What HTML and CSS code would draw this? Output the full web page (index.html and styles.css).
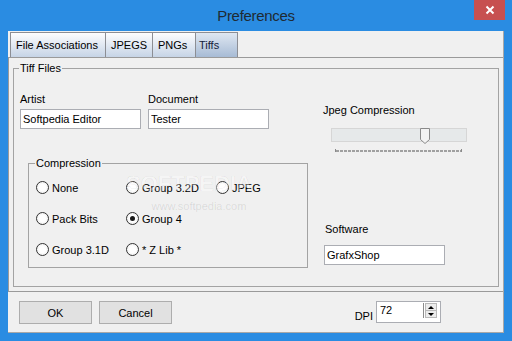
FILE: index.html
```html
<!DOCTYPE html>
<html>
<head>
	<title>Preferences</title>
	<meta charset="utf-8" />
	<link rel="stylesheet" href="styles.css">
</head>
<body>
	<div class="window">
		<div class="titlebar">
			<span></span>
			<h1>Preferences</h1>
			<button class="close" aria-label="close">
				<svg width="10" height="10" viewBox="0 0 10 10"><path d="M1.5 1.5L8.5 8.5M8.5 1.5L1.5 8.5" stroke="#fff" stroke-width="2"/></svg>
			</button>
		</div>
		<div class="client">
			<div class="tabs">
				<div class="tab tab-assoc">File Associations</div>
				<div class="tab tab-jpegs">JPEGS</div>
				<div class="tab tab-pngs">PNGs</div>
				<div class="tab tab-tiffs active">Tiffs</div>
			</div>
			<div class="panel">
				<fieldset class="group tiff-files">
					<legend>Tiff Files</legend>
					<div class="tiff-body">
						<div class="col-left">
							<div class="fields">
								<div class="field">
									<label for="inpArtist">Artist</label>
									<input type="text" id="inpArtist" value="Softpedia Editor">
								</div>
								<div class="field">
									<label for="inpDocument">Document</label>
									<input type="text" id="inpDocument" value="Tester">
								</div>
							</div>
							<fieldset class="group compression">
								<legend>Compression</legend>
								<div class="radios">
									<label><input type="radio" name="comp"> None</label>
									<label><input type="radio" name="comp"> Group 3.2D</label>
									<label><input type="radio" name="comp"> JPEG</label>
									<label><input type="radio" name="comp"> Pack Bits</label>
									<label><input type="radio" name="comp" checked> Group 4</label>
									<span></span>
									<label><input type="radio" name="comp"> Group 3.1D</label>
									<label><input type="radio" name="comp"> * Z Lib *</label>
								</div>
							</fieldset>
						</div>
						<div class="col-right">
							<p class="label jpeg-label">Jpeg Compression</p>
							<div class="slider">
								<svg class="thumb" width="10" height="16" viewBox="0 0 10 16"><path d="M0.5 0.5H9.5V11.5L5 15.5L0.5 11.5Z" fill="#f3f3f3" stroke="#8a8a8a"/></svg>
							</div>
							<div class="ticks"></div>
							<label class="label software-label" for="inpSoftware">Software</label>
							<input type="text" id="inpSoftware" class="software" value="GrafxShop">
						</div>
					</div>
				</fieldset>
			</div>
			<div class="bottombar">
				<button class="btn">OK</button>
				<button class="btn">Cancel</button>
				<div class="dpi">
					<span class="dpi-label">DPI</span>
					<div class="spin">
						<span class="spin-value">72</span>
						<div class="spin-btns">
							<span class="up"></span>
							<span class="down"></span>
						</div>
					</div>
				</div>
			</div>
		</div>
		<div class="watermark">
			<span class="wm-big">SOFTPEDIA</span>
			<span class="wm-small">www.softpedia.com</span>
		</div>
	</div>
</body>
</html>
```
FILE: styles.css
```css
/* general styles */
* { box-sizing: border-box; }
body { margin: 0; font-family: "Liberation Sans", Arial, sans-serif; font-size: 11px; color: #000; background: #2a8ce2; }
.window { position: relative; width: 512px; height: 341px; padding: 0 8px; background: #2a8ce2; }

/* title bar */
.titlebar { display: grid; grid-template-columns: 1fr auto 1fr; height: 31px; }
.titlebar h1 { margin: 0; padding-top: 7px; font-size: 15px; line-height: 17px; font-weight: normal; color: #1f2a33; letter-spacing: -0.3px; }
.close { justify-self: end; display: flex; align-items: center; justify-content: center; width: 31px; height: 20px; margin-right: -1px; padding: 0; border: none; background: #c75050; }

/* client area */
.client { height: 302px; background: #f0f0f0; border-right: 1px solid #a8a8a8; border-bottom: 1px solid #a8a8a8; }
.tabs { display: flex; height: 26px; padding: 1px 0 0 2px; }
.tab { height: 25px; padding: 0 5px; line-height: 24px; border: 1px solid #8c8e94; border-bottom: none; background: linear-gradient(#fdfdfe, #c6d4e6); white-space: nowrap; }
.tab + .tab { margin-left: -1px; }
.tab-assoc { width: 96px; }
.tab-jpegs { width: 48px; }
.tab-pngs { width: 44px; }
.tab-tiffs { width: 43px; padding-left: 3px; }
.tab.active { background: linear-gradient(#dfe7f1, #a7bbd5); color: #14213a; }
.panel { height: 235px; padding: 4px; border: 1px solid #9a9a9a; border-right: none; }

/* group boxes */
.group { margin: 0; padding: 0; border: 1px solid #a3a3a3; }
.group legend { padding: 0 1px; line-height: 13px; }
.tiff-files { height: 225px; }
.tiff-files legend { margin-left: 5px; }
.tiff-body { display: grid; grid-template-columns: 303px 1fr; padding: 18px 0 0 6px; }
.label { display: block; margin: 0; line-height: 13px; }
input[type=text] { display: block; width: 121px; height: 20px; padding: 0 2px; border: 1px solid #abadb3; font-family: inherit; font-size: 11px; color: #000; background: #fff; }

/* left column */
.fields { display: flex; gap: 7px; }
.field label { display: block; line-height: 13px; margin-bottom: 3px; }
.compression { width: 280px; margin: 28px 0 0 8px; }
.compression legend { margin-left: 6px; }
.radios { display: grid; grid-template-columns: 90px 90px auto; grid-auto-rows: 31px; padding: 2px 0 2px 7px; }
.radios label { display: flex; align-items: center; gap: 3px; }
input[type=radio] { appearance: none; width: 13px; height: 13px; margin: 0; border: 1px solid #333; border-radius: 50%; background: radial-gradient(#fff 40%, #e6e6e6); display: grid; place-items: center; }
input[type=radio]:checked::after { content: ""; width: 5px; height: 5px; border-radius: 50%; background: #1a1a1a; }

/* right column */
.jpeg-label { margin-top: 11px; }
.slider { width: 136px; height: 14px; margin: 11px 0 0 8px; padding-left: 88px; border: 1px solid #d6d6d6; background: #e6e9ea; }
.thumb { display: block; margin-top: -1px; }
.ticks { width: 127px; height: 3px; margin: 7px 0 0 12px; border-left: 1px solid #8a8a8a; border-right: 1px solid #8a8a8a; background: repeating-linear-gradient(90deg, #a0a0a0 0 3px, transparent 3px 4px); background-size: 100% 2px; background-repeat: no-repeat; background-position: 0 1px; }
.software-label { margin: 71px 0 0 2px; }
.software { margin: 9px 0 0 1px; }

/* bottom bar */
.bottombar { display: flex; align-items: flex-start; gap: 7px; padding: 9px 62px 0 11px; }
.btn { width: 73px; height: 23px; padding: 0; border: 1px solid #adadad; background: #e1e1e1; font-family: inherit; font-size: 11px; color: #000; }
.dpi { display: flex; align-items: flex-start; gap: 3px; margin-left: auto; }
.dpi-label { margin-top: 9px; line-height: 13px; }
.spin { display: flex; width: 65px; height: 22px; border: 1px solid #abadb3; background: #fff; }
.spin-value { flex: 1; padding: 2px 0 0 3px; line-height: 13px; }
.spin-btns { display: flex; flex-direction: column; width: 14px; height: 15px; margin: 1px 3px 0 0; border-left: 1px solid #8c8c8c; padding-left: 1px; }
.spin-btns span { flex: 1; display: flex; align-items: center; justify-content: center; border: 1px solid #b9b9b9; background: #ececec; }
.spin-btns span + span { margin-top: -1px; }
.up::after { content: ""; border: 3px solid transparent; border-bottom: 3px solid #000; border-top: none; }
.down::after { content: ""; border: 3px solid transparent; border-top: 3px solid #000; border-bottom: none; }

/* watermark */
.watermark { position: absolute; left: 126px; top: 172px; display: flex; flex-direction: column; align-items: center; pointer-events: none; }
.wm-big { font-size: 22px; font-weight: bold; line-height: 24px; color: rgba(255, 255, 255, 0.35); -webkit-text-stroke: 0.5px rgba(0, 0, 0, 0.1); }
.wm-small { margin: 4px 0 0 20px; font-size: 11px; line-height: 13px; color: rgba(0, 0, 0, 0.1); }
```
